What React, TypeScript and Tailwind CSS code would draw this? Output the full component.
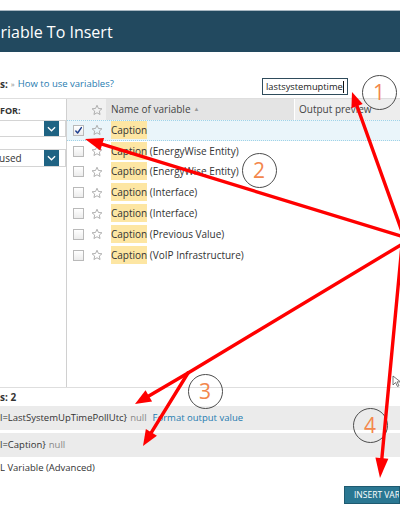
import React from 'react';

const Star = () => (
  <svg width="12" height="12" viewBox="0 0 24 24" fill="none" stroke="#a3a3a3" strokeWidth="1.7" strokeLinejoin="round">
    <polygon points="12,2.5 14.9,8.9 21.8,9.6 16.6,14.2 18.1,21 12,17.5 5.9,21 7.4,14.2 2.2,9.6 9.1,8.9" />
  </svg>
);

const Checkbox = ({ checked }: { checked?: boolean }) => (
  <div className="w-[11px] h-[11px] border border-[#b9b9b9] bg-gradient-to-b from-white to-[#ececec] flex items-center justify-center">
    {checked && (
      <svg width="9" height="9" viewBox="0 0 10 10" fill="none" stroke="#1d3f8f" strokeWidth="1.6" strokeLinecap="round" strokeLinejoin="round">
        <polyline points="2,5.5 4,7.8 8.2,1.8" />
      </svg>
    )}
  </div>
);

const Chevron = () => (
  <svg width="9" height="6" viewBox="0 0 10 6" fill="none" stroke="white" strokeWidth="1.4">
    <polyline points="1,1 5,5 9,1" />
  </svg>
);

const rows: { suffix: string; checked?: boolean }[] = [
  { suffix: '', checked: true },
  { suffix: ' (EnergyWise Entity)' },
  { suffix: ' (EnergyWise Entity)' },
  { suffix: ' (Interface)' },
  { suffix: ' (Interface)' },
  { suffix: ' (Previous Value)' },
  { suffix: ' (VoIP Infrastructure)' },
];

type Pt = [number, number];
const Arrow = ({ from, to, len = 17, half = 6.5 }: { from: Pt; to: Pt; len?: number; half?: number }) => {
  const dx = to[0] - from[0];
  const dy = to[1] - from[1];
  const d = Math.hypot(dx, dy);
  const ux = dx / d;
  const uy = dy / d;
  const bx = to[0] - ux * len;
  const by = to[1] - uy * len;
  const px = -uy;
  const py = ux;
  const pts = `${to[0]},${to[1]} ${bx + px * half},${by + py * half} ${bx - px * half},${by - py * half}`;
  return (
    <g>
      <line x1={from[0]} y1={from[1]} x2={bx + ux * 2} y2={by + uy * 2} stroke="#ff0000" strokeWidth="3.4" strokeLinecap="round" />
      <polygon points={pts} fill="#ff0000" />
    </g>
  );
};

const Circle = ({ cx, cy, n }: { cx: number; cy: number; n: string }) => (
  <div
    className="absolute w-[35px] h-[35px] rounded-full border-[1.5px] border-[#4d4d4d] flex items-center justify-center text-[21px] leading-none text-[#f3874c]"
    style={{ left: cx - 17.5, top: cy - 17.5 }}
  >
    {n}
  </div>
);

export default function App() {
  const C: Pt = [404, 237];
  const J: Pt = [188, 373];
  return (
    <div className="relative w-[400px] h-[516px] overflow-hidden bg-white text-[#333] font-['Open_Sans',sans-serif]">
      <div className="h-[10px]" />
      <div className="h-[42px] bg-[#22495f] border-t border-[#a9b8c2] flex items-center overflow-hidden">
        <span className="ml-[-18px] text-[16px] text-white whitespace-nowrap">Variable To Insert</span>
      </div>
      <div className="h-[46px] flex items-start text-[9.5px] relative">
        <div className="flex items-center gap-[3px] mt-[26px] h-[12px]">
          <span className="font-bold text-[10px]">s:</span>
          <span className="text-[#888] text-[8px]">»</span>
          <span className="text-[#1f7bb0]">How to use variables?</span>
        </div>
        <div className="absolute left-[262px] top-[26px] w-[86px] h-[17px] border border-[#2f4c5c] bg-white flex items-center pl-[3px] text-[9.3px] text-[#222] whitespace-nowrap overflow-hidden">
          lastsystemuptime<span className="w-px h-[12px] bg-[#111] shrink-0" />
        </div>
      </div>
      <div className="border-t border-[#dedede] flex h-[289px]">
        <div className="w-[67px] border-r border-[#d0d0d0] shrink-0">
          <div className="pt-[7px] text-[9px] font-bold leading-none">FOR:</div>
          <div className="mt-[5px] h-[17px] border border-[#d4d4d4] border-l-0 flex justify-end">
            <div className="w-[15px] mr-[6px] bg-[#1f6383] flex items-center justify-center"><Chevron /></div>
          </div>
          <div className="mt-[12px] h-[18px] border border-[#d4d4d4] border-l-0 flex items-center justify-between text-[10px]">
            <span className="ml-[-1px]">used</span>
            <div className="w-[15px] h-full mr-[6px] bg-[#1f6383] flex items-center justify-center"><Chevron /></div>
          </div>
        </div>
        <div className="flex-1 flex flex-col text-[10px]">
          <div className="h-[21px] flex bg-[#f1f1f1]">
            <div className="w-[21px]" />
            <div className="w-[18px] flex items-center justify-center"><Star /></div>
            <div className="w-[189px] bg-[#e4e4e4] flex items-center pl-[5px] text-[#444] border-r border-white">
              Name of variable <span className="ml-[3px] text-[6px] text-[#999]">▲</span>
            </div>
            <div className="flex-1 flex items-center pl-[4px] text-[#444] bg-[#ededed]">Output preview</div>
          </div>
          {rows.map((r, i) => (
            <div
              key={i}
              className={`h-[20.8px] flex items-center ${r.checked ? 'bg-[#eaf5fa] border-y border-dotted border-[#9fd3e8]' : ''}`}
            >
              <div className="w-[21px] flex justify-center pl-[2px]"><Checkbox checked={r.checked} /></div>
              <div className="w-[18px] flex items-center justify-center"><Star /></div>
              <div className="pl-[5px] whitespace-nowrap">
                <span className="bg-[#fde6a3] py-[2px]">Caption</span>
                {r.suffix}
              </div>
            </div>
          ))}
        </div>
      </div>
      <div className="border-t border-[#dedede] text-[9.5px]">
        <div className="h-[18px] flex items-center font-bold text-[10px]">s: 2</div>
        <div className="h-[24px] bg-[#ebebeb] flex items-center whitespace-nowrap">
          <span>{'l=LastSystemUpTimePollUtc}'}</span>
          <span className="text-[#888] ml-[3px]">null</span>
          <span className="text-[#1f7bb0] ml-[6px]">Format output value</span>
        </div>
        <div className="h-[3px]" />
        <div className="h-[24px] bg-[#ebebeb] flex items-center whitespace-nowrap">
          <span>{'l=Caption}'}</span>
          <span className="text-[#888] ml-[3px]">null</span>
        </div>
        <div className="h-[22px] flex items-center">L Variable (Advanced)</div>
        <div className="flex justify-end mt-[7px]">
          <div className="w-[56px] h-[18px] bg-[#2a7792] border border-[#1e5a70] text-white text-[8.5px] flex items-center pl-[9px] whitespace-nowrap overflow-hidden">
            INSERT VARIABLE
          </div>
        </div>
      </div>

      <Circle cx={379} cy={92} n="1" />
      <Circle cx={259} cy={170} n="2" />
      <Circle cx={205} cy={391} n="3" />
      <Circle cx={370} cy={425} n="4" />

      <svg className="absolute inset-0 pointer-events-none" width="400" height="516">
        <path d="M393 376 l0 9 l2.5 -2.5 l2 4 l1.5 -0.8 l-2 -3.8 l3.5 0 z" fill="white" stroke="#555" strokeWidth="0.8" />
        <Arrow from={C} to={[352, 92]} len={15} half={6} />
        <Arrow from={C} to={[85, 139]} len={18} half={6.5} />
        <line x1={C[0]} y1={C[1] + 6} x2={J[0]} y2={J[1]} stroke="#ff0000" strokeWidth="3.4" strokeLinecap="round" />
        <Arrow from={J} to={[135, 404]} len={16} half={6.5} />
        <Arrow from={J} to={[143, 446]} len={16} half={6.5} />
        <Arrow from={[402, 245]} to={[380, 478]} len={20} half={6.5} />
      </svg>
    </div>
  );
}
